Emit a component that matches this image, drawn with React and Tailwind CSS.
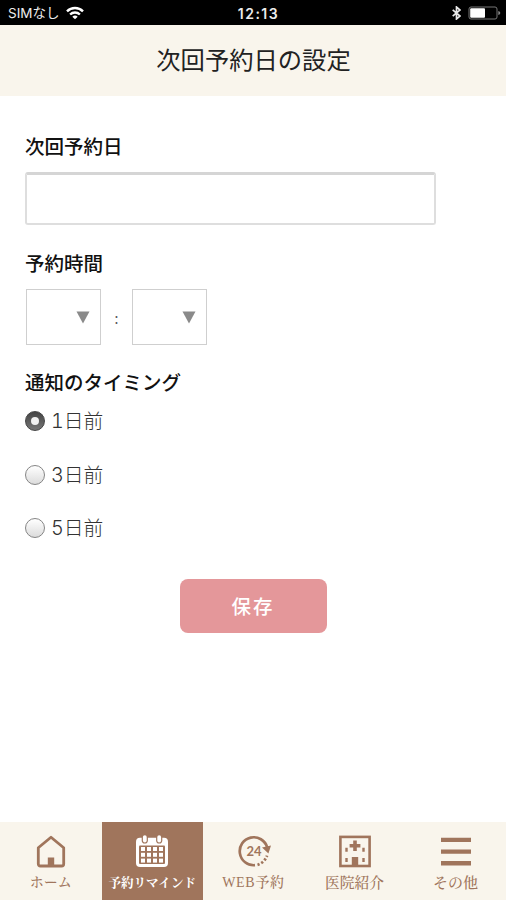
import clsx from 'clsx'

const timings = [
  { id: 'd1', num: '1', checked: true },
  { id: 'd3', num: '3', checked: false },
  { id: 'd5', num: '5', checked: false },
]

const tabs = [
  { label: 'ホーム', icon: HomeIcon, text: 'text-[14px] font-medium' },
  { label: '予約リマインド', icon: CalendarIcon, text: 'text-[12.6px] font-bold', active: true },
  { label: 'WEB予約', icon: ClockIcon, text: 'text-[14px] font-medium tracking-[0.7px]' },
  { label: '医院紹介', icon: HospitalIcon, text: 'text-[14.7px] font-medium' },
  { label: 'その他', icon: MenuIcon, text: 'text-[15px] font-medium' },
]

function HomeIcon() {
  return (
    <svg width="34" height="34" viewBox="0 0 34 34" fill="none">
      <path d="M4.3 12.8 17 2.2l12.7 10.6V29a2 2 0 0 1-2 2H6.3a2 2 0 0 1-2-2Z" stroke="#a0755c" strokeWidth="2.8" strokeLinejoin="round" />
      <path d="M13.8 22.5h6.4V31h-6.4Z" fill="#a0755c" />
    </svg>
  )
}

function CalendarIcon() {
  return (
    <svg width="34" height="34" viewBox="0 0 34 34" fill="none">
      <rect x="1" y="2.7" width="32" height="29.3" rx="4" fill="#fff" />
      <rect x="4" y="10.4" width="26" height="18.6" rx="1" fill="#a0755c" />
      {/* Binding rings */}
      {[9.8, 24.2].map(x => (
        <g key={x}>
          <rect x={x - 3.1} y="-1" width="6.2" height="9.6" rx="3.1" fill="#a0755c" />
          <rect x={x - 1.9} y="0.2" width="3.8" height="7.2" rx="1.9" fill="#fff" />
        </g>
      ))}
      {/* Days */}
      {[12, 17.8, 23.6].map(y =>
        [6, 12, 18, 24].map(x => (
          <rect key={`${x}-${y}`} x={x} y={y} width="4" height="4" fill="#fff" />
        ))
      )}
    </svg>
  )
}

function ClockIcon() {
  return (
    <svg width="34" height="34" viewBox="0 0 34 34" fill="none">
      <path d="M18 30.2A14 14 0 1 1 30.2 12.4" stroke="#a0755c" strokeWidth="2.7" />
      <path d="M25 12.4 34 10.6 31.4 18.4Z" fill="#a0755c" />
      <path d="M20.5 29.800A14 14 0 0 0 30 20.6" stroke="#a0755c" strokeWidth="2.8" strokeDasharray="2.200 1.9" />
      <text x="17" y="20.8" textAnchor="middle" fill="#a0755c" className="font-['Lato',sans-serif] text-[13px] font-bold">24</text>
    </svg>
  )
}

function HospitalIcon() {
  return (
    <svg width="34" height="34" viewBox="0 0 34 34" fill="none">
      <rect x="2.4" y="1.9" width="29.2" height="29.1" stroke="#a0755c" strokeWidth="2.6" />
      <path d="M15.2 5.500h3.6V9h3.600v3.600h-3.600v3.500h-3.600v-3.500h-3.600V9h3.600Z" fill="#a0755c" />
      <path d="M13.8 22h6.4v8.2h-6.4Z" fill="#a0755c" />
      <path d="M7.3 12.7h2.4v4H7.3ZM24.3 12.7h2.4v4h-2.4ZM7.3 23h2.4v4H7.3ZM24.3 23h2.4v4h-2.4Z" fill="#a0755c" />
    </svg>
  )
}

function MenuIcon() {
  return (
    <svg width="34" height="34" viewBox="0 0 34 34">
      <path d="M2 2.7h30v4.4H2ZM2 14.4h30v4.4H2ZM2 26h30v4.4H2Z" fill="#a0755c" />
    </svg>
  )
}

function StatusBar() {
  return (
    <div className="grid h-[25px] shrink-0 grid-cols-3 items-center bg-black pl-2 pr-[5px] text-[#ececec]">
      <div className="flex items-center gap-[7px]">
        <span className="pt-0.5 font-['Inter','Noto_Sans_CJK_JP',sans-serif] text-[13.5px] leading-none">SIMなし</span>
        <svg width="18" height="14" viewBox="0 0 18 14" fill="none" stroke="#fff" strokeWidth="2.4">
          <path d="M1 5.3a11.4 11.4 0 0 1 16 0" />
          <path d="M4.1 8.5a7 7 0 0 1 9.8 0" />
          <path d="M9 13.3 6.3 10.7a3.9 3.9 0 0 1 5.4 0Z" fill="#fff" stroke="none" />
        </svg>
      </div>
      <span className="pl-2 pt-0.5 text-center font-['Inter',sans-serif] text-[14px] font-semibold leading-none tracking-[1.5px]">12:13</span>
      <div className="flex items-center justify-end gap-[7px]">
        <svg width="9" height="14" viewBox="0 0 9 14" fill="none" stroke="#e8e8e8" strokeWidth="1.7">
          <path d="M.7 3.8 8 10 4.5 13V1L8 4 .7 10.2" />
        </svg>
        <svg width="33" height="14" viewBox="0 0 33 14">
          <rect x="1" y="1" width="28" height="12" rx="2" fill="none" stroke="#777" />
          <rect x="2.2" y="2.2" width="14.8" height="9.6" rx="1" fill="#fff" />
          <path d="M30.3 5v4q2-.5 2-2t-2-2Z" fill="#888" />
        </svg>
      </div>
    </div>
  )
}

function Label({ children, className }) {
  return (
    <h2 className={clsx('text-[19.5px] font-medium leading-7 text-[#111]', className)}>{children}</h2>
  )
}

function TimeSelect() {
  return (
    <button className="flex h-14 w-[75px] items-center justify-end border-[1.5px] border-[#cfcfcf] bg-white pr-[10px]">
      <svg width="14" height="13" viewBox="0 0 14 13">
        <path d="M.5.5h13L7 12.5Z" fill="#8a8a8a" />
      </svg>
    </button>
  )
}

function Radio({ checked }) {
  return (
    <span
      className={clsx(
        'flex size-5 items-center justify-center rounded-full border',
        checked
          ? 'border-[#444] bg-linear-to-b from-[#444] to-[#777]'
          : 'border-[#858585] bg-linear-to-b from-white to-[#dcdcdc]'
      )}
    >
      {checked && <span className="size-2 rounded-full bg-[#f1f1f1]" />}
    </span>
  )
}

export default function App() {
  return (
    <div className="flex h-[900px] w-[506px] flex-col overflow-hidden bg-white font-['Noto_Sans_CJK_JP',sans-serif]">
      <StatusBar />

      <header className="flex h-[71px] shrink-0 items-center justify-center bg-[#f9f5ec] pb-1 pl-px">
        <h1 className="text-[24.3px] leading-8 text-[#222]">次回予約日の設定</h1>
      </header>

      <main className="flex-1 px-[25px] pt-9">
        <Label>次回予約日</Label>
        <div className="mt-3 h-[53px] w-[411px] rounded-[3px] border-2 border-t-[3px] border-[#dedede] border-t-[#d5d5d5]" />

        <Label className="mt-6">予約時間</Label>
        <div className="mt-3 flex items-center pl-px">
          <TimeSelect />
          <span className="w-[31px] pt-0.5 text-center text-sm leading-none text-[#555]">:</span>
          <TimeSelect />
        </div>

        <Label className="mt-[23px]">通知のタイミング</Label>
        <div className="mt-[15px] flex flex-col gap-[33.5px]">
          {timings.map(({ id, num, checked }) => (
            <div key={id} className="flex h-5 items-center gap-1.5">
              <Radio checked={checked} />
              <span className="font-['Inter','Noto_Sans_CJK_JP',sans-serif] text-[19.8px] font-light tabular-nums leading-5 text-[#333]">{num}日前</span>
            </div>
          ))}
        </div>

        <button className="mx-auto mt-[41px] block h-[54px] w-[147px] rounded-lg bg-[#e4979a] text-[19.5px] font-medium tracking-[2px] text-white">
          保存
        </button>
      </main>

      <nav className="grid h-[78px] shrink-0 grid-cols-[101.5px_101.5px_101px_101px_101px] bg-[#f9f5ec]">
        {tabs.map(({ label, icon: Icon, text, active }) => (
          <div
            key={label}
            className={clsx(
              'flex flex-col items-center pt-[13px]',
              active ? 'bg-[#a0755c] text-white' : 'text-[#a0755c]'
            )}
          >
            <Icon />
            <span
              className={clsx(
                "mt-1 whitespace-nowrap font-['Liberation_Serif','Noto_Serif_CJK_JP','Noto_Sans_CJK_JP',serif] leading-5",
                text
              )}
            >
              {label}
            </span>
          </div>
        ))}
      </nav>
    </div>
  )
}
